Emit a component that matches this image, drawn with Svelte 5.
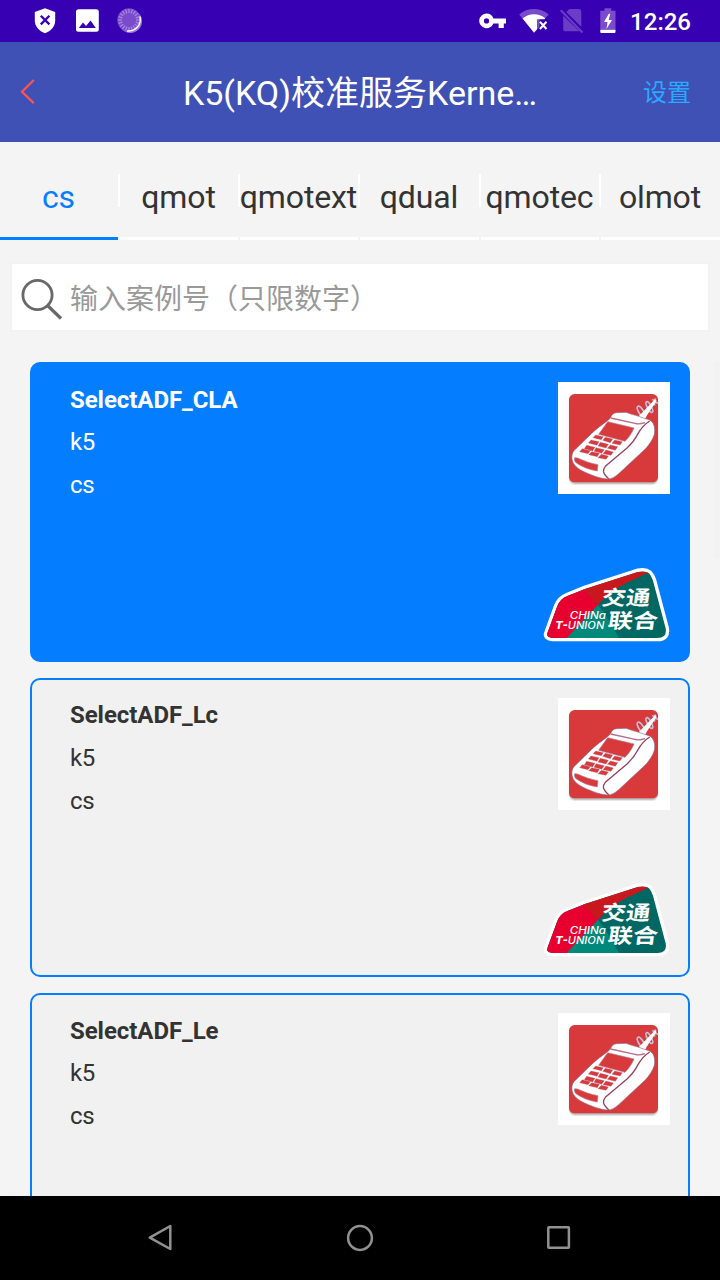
<script>
  const tabs = ['cs', 'qmot', 'qmotext', 'qdual', 'qmotec', 'olmot'];
  const cards = [
    { title: 'SelectADF_CLA', device: 'k5', kind: 'cs', union: true },
    { title: 'SelectADF_Lc', device: 'k5', kind: 'cs', union: true },
    { title: 'SelectADF_Le', device: 'k5', kind: 'cs', union: false }
  ];
  let activeTab = $state(0);
  let selected = $state(0);
  const ticks = Array.from({ length: 20 }, (_, i) => i * 18);
</script>

<div class="screen">
  <div class="status">
    <svg class="shield" width="22" height="26" viewBox="0 0 22 26">
      <path fill="#fff" d="M11 .2 21.2 4v8.6c0 6-4.2 10.700-10.200 12.600C5 23.300.8 18.600.8 12.600V4z" />
      <path stroke="#3700b3" stroke-width="2.300" d="m6.800 7.800 8.600 8.600m0-8.600-8.600 8.600" />
    </svg>
    <svg class="photo" width="24" height="24" viewBox="0 0 24 24">
      <rect x="0" y=".2" width="22.800" height="22.600" rx="2.500" fill="#fff" />
      <path fill="#3700b3" d="m2.800 19 4.200-5.400 3 3.500 4.600-5.700L19.800 19z" />
    </svg>
    <svg class="spinner" width="26" height="26" viewBox="0 0 26 26">
      <circle cx="13.300" cy="13.300" r="11.700" fill="#9d7ad8" />
      <circle cx="12" cy="12" r="11.700" fill="#7a4bcc" />
      <g stroke="#a88add" stroke-width="1.200">
        {#each ticks as angle}
          <path d="M12 1v4" transform="rotate({angle} 12 12)" />
        {/each}
      </g>
      <path d="M22.900 8.500c2.200 8.500-5 15.500-13 14.500" fill="none" stroke="#fff" stroke-width="1.500" />
    </svg>
    <span class="grow"></span>
    <svg class="key" width="28" height="16" viewBox="0 0 28 16">
      <path fill="#fff" fill-rule="evenodd" d="M7.500.6a7.300 7.300 0 0 1 6.900 4.800H27v5h-2.200v4.700h-5.200v-4.700h-5.200A7.300 7.300 0 1 1 7.500.6zm0 4.700a2.600 2.600 0 1 0 0 5.200 2.600 2.600 0 0 0 0-5.200z" />
    </svg>
    <svg class="wifi" width="32" height="26" viewBox="0 0 32 26">
      <path fill="#7a4bcc" d="M15 25 .2 6.400C9-.9 21-.9 29.800 6.400L26.500 10h-6v9z" />
      <path fill="#fff" d="M15 24.400 3.600 10.500c6.500-5.700 16.200-5.700 22.700-.2l-.8 1H18v10z" />
      <path d="m20.900 13.800 6.600 7.200m0-7.200L20.900 21" stroke="#fff" stroke-width="2" />
    </svg>
    <svg class="sim" width="24" height="26" viewBox="0 0 24 26">
      <path fill="#6b3dc6" d="M9.500 1h9.300c1.500 0 2.500 1 2.500 2.300V19L6.300 4.100zM3.200 7.800l16.400 15.500H5.200c-1.300 0-2-.8-2-2z" />
      <path stroke="#6b3dc6" stroke-width="2" d="M.8 2.300 22.500 24.500" />
    </svg>
    <svg class="battery" width="16" height="26" viewBox="0 0 16 26">
      <path fill="#7a4bcc" d="M4.500.2h6.800v2.500h4.200v19H.3v-19h4.200z" />
      <path fill="#fff" d="M.3 21.800h15.200v2c0 .9-.5 1.300-1.300 1.300H1.600c-.8 0-1.300-.4-1.300-1.300z" />
      <path fill="#fff" d="M8.800 5.700 4 14h3.500l-1 7L12 12H8.700l1.500-6.300z" />
    </svg>
    <span class="time">12:26</span>
  </div>

  <header>
    <svg width="16" height="26" viewBox="0 0 16 26" aria-label="back">
      <path d="M13.800 1 2 12.800l11.800 11.400" fill="none" stroke="#ff5252" stroke-width="2.300" />
    </svg>
    <h1>K5(KQ)校准服务Kerne…</h1>
    <span class="settings">设置</span>
  </header>

  <nav>
    {#each tabs as tab, i}
      {#if i > 0}<i class="divider"></i>{/if}
      <button class:active={i === activeTab} onclick={() => (activeTab = i)}>{tab}</button>
    {/each}
  </nav>

  <div class="search">
    <svg width="44" height="44" viewBox="0 0 44 44" fill="none" stroke="#686868">
      <circle cx="17.500" cy="18" r="14.600" stroke-width="2.800" />
      <path d="M27.500 28.500 41 41.500" stroke-width="3.200" />
    </svg>
    <span>输入案例号（只限数字）</span>
  </div>

  <main>
    {#each cards as card, i}
      <section class="card" class:selected={i === selected} onclick={() => (selected = i)} role="presentation">
        <div class="info">
          <h2>{card.title}</h2>
          <p>{card.device}</p>
          <p>{card.kind}</p>
        </div>
        <div class="marks">
          <svg class="terminal" width="112" height="112" viewBox="30 30 336 336">
            <rect x="30" y="30" width="336" height="336" fill="#fff" />
            <rect x="62" y="71" width="269" height="268" rx="18" fill="#999" opacity=".25" />
            <rect x="63" y="69" width="267" height="266" rx="17" fill="#777" opacity=".4" />
            <rect x="63" y="66" width="267" height="265" rx="17" fill="#d8393b" />
            <g fill="none" stroke="#c3bfd8" stroke-width="5">
              <ellipse cx="280" cy="120" rx="7" ry="20" transform="rotate(-32 280 120)" />
              <ellipse cx="304" cy="105" rx="6" ry="18" transform="rotate(-28 304 105)" />
              <path d="m313 82 17 13m-8-16-3 22" />
            </g>
            <path d="M265 140 321 82l5 4-40 60z" fill="#fff" />
            <path fill="#fff" stroke="#87718f" stroke-width="2" d="M188 137c2-8 8-14 17-15l29-1c9 2 16 7 29 9l42 14c14 8 17 25 14 43-4 15-15 30-25 42l-82 76c-12 10-20 16-34 16-18-1-32-6-47-12-26-10-44-19-54-34-6-11-8-25 0-38l53-52c23-22 43-32 58-48z" />
            <path fill="#d8393b" stroke="#aa7890" stroke-width="2" d="m179 149 79 19c-6 14-14 27-27 40l-79-21z" />
            <path fill="none" stroke="#b56f8a" stroke-width="4" d="m188 138 73 16c10 3 18 2 30-2" />
            <path fill="none" stroke="#94455d" stroke-width="4" d="M305 147c-14 9-26 22-35 38-8 16-20 31-33 43l-65 55c-8 10-10 20 10 37" />
            <path fill="#d8393b" stroke="#b88498" stroke-width="2" d="m80 257 9 1c19 9 39 16 61 20l-2 19c-24-4-48-13-64-25-4-4-6-9-4-15z" />
            <g fill="#d8393b" stroke="#ad6882" stroke-width="1">
              <path d="m143 189 23 5-6 9-25-6zm29 7 22 5-7 11-23-7zm28 8 23 5-7 10-24-5zM129 204l24 5-6 11-26-7zm28 7 24 6-7 11-24-6zm30 8 22 5-7 11-24-6zM116 220l25 6-7 11-25-7zm28 7 25 6-8 11-23-6zm30 7 22 6-7 10-24-5zM103 230l24 6-7 9-25-6zm28 9 23 5-6 10-26-6zm29 8 21 5-7 10-24-5z" />
            </g>
          </svg>
          {#if card.union}
            <svg class="union" width="128" height="78" viewBox="22 18 384 234">
              <defs>
                <clipPath id="union-{i}">
                  <path d="M36 217 65 138Q74 116 95 108L150 86 290 41Q325 28 340 40 347 47 352 62L390 205Q395 234 366 234H50Q29 232 36 217Z" />
                </clipPath>
              </defs>
              <path fill="#fff" stroke="#fff" stroke-width="20" stroke-linejoin="round" d="M36 217 65 138Q74 116 95 108L150 86 290 41Q325 28 340 40 347 47 352 62L390 205Q395 234 366 234H50Q29 232 36 217Z" />
              <g clip-path="url(#union-{i})">
                <path fill="#006763" d="M20 20h380v220H20z" />
                <path fill="#e7002f" d="M20 80h118l49 55-95 101H20z" />
                <path fill="#c9171e" d="m138 84 40-60h170l-10 14-68 32-46 26-37 39z" />
                <path fill="#00887a" d="m187 134 28 40 36 62H91z" />
              </g>
              <g fill="#fff" font-family="'Noto Sans CJK SC', sans-serif" font-weight="700">
                <text transform="translate(195 134) skewX(-8)" font-size="61" textLength="146" lengthAdjust="spacingAndGlyphs">交通</text>
                <text transform="translate(214 203) skewX(-8)" font-size="61" textLength="150" lengthAdjust="spacingAndGlyphs">联合</text>
              </g>
              <g fill="#fff" font-family="Inter, sans-serif" font-style="italic" font-weight="500">
                <text x="102" y="178" font-size="31" textLength="109" lengthAdjust="spacingAndGlyphs">CHINa</text>
                <text x="59" y="207" font-size="32" textLength="147" lengthAdjust="spacingAndGlyphs"><tspan font-weight="800">T-</tspan>UNION</text>
              </g>
            </svg>
          {/if}
        </div>
      </section>
    {/each}
    <i class="scrollbar"></i>
  </main>

  <footer>
    <svg width="26" height="28" viewBox="0 0 26 28"><path d="M23.300 2v23L2.800 13.700z" /></svg>
    <svg width="28" height="28" viewBox="0 0 28 28"><circle cx="14" cy="14" r="11.900" /></svg>
    <svg width="26" height="28" viewBox="0 0 26 28"><rect x="2.300" y="3.200" width="20.600" height="20.600" rx=".5" /></svg>
  </footer>
</div>

<style>
  :global(body) { margin: 0; overflow: hidden; }
  .screen {
    width: 720px;
    height: 1280px;
    display: flex;
    flex-direction: column;
    overflow: hidden;
    background: #f4f4f4;
    color: #333;
    font-family: Roboto, 'Noto Sans CJK SC', sans-serif;
  }
  svg { display: block; flex: none; }
  .status {
    height: 42px;
    flex: none;
    display: flex;
    align-items: center;
    background: #3700b3;
    padding: 0 29px 0 34px;
    box-sizing: border-box;
    color: #fff;
  }
  .photo { margin-left: 20px; }
  .spinner { margin-left: 17px; }
  .grow { flex: 1; }
  .wifi { margin-left: 12px; }
  .sim { margin-left: 9px; }
  .battery { margin-left: 16px; }
  .time { margin-left: 14px; padding-top: 2px; font-size: 24px; font-weight: 500; line-height: 40px; }
  header {
    height: 100px;
    flex: none;
    display: flex;
    align-items: center;
    background: #3f51b5;
    color: #fff;
    padding: 0 29px 0 20px;
    box-sizing: border-box;
  }
  h1 { flex: 1; margin: 0; padding: 2px 0 0 41px; text-align: center; font-size: 34px; font-weight: 400; line-height: 50px; white-space: nowrap; }
  .settings { font-size: 24px; line-height: 36px; padding-top: 1px; color: #29a9ff; }
  nav {
    height: 98px;
    flex: none;
    display: grid;
    grid-template-columns: 118px 2px 118px 2px 118px 2px 119px 2px 118px 2px 119px;
  }
  nav button {
    min-width: 0;
    padding: 15px 1px 0 0;
    border: 0;
    border-bottom: 3px solid #fff;
    background: none;
    font: 32px/42px Roboto, sans-serif;
    letter-spacing: -.12px;
    white-space: nowrap;
    display: flex;
    align-items: center;
    justify-content: center;
    color: #333;
  }
  nav button.active { color: #047eff; border-color: #047eff; }
  .divider { height: 33px; margin-top: 32px; background: #fff; }
  .search {
    flex: none;
    height: 66px;
    margin: 24px 12px 32px;
    padding-left: 8px;
    box-sizing: border-box;
    display: flex;
    align-items: center;
    background: #fff;
    box-shadow: 0 0 0 2px #f2f2f2;
    color: #999;
    font-size: 28px;
  }
  .search svg { margin: 3px 6px 0 0; }
  main { position: relative; flex: 1; min-height: 0; overflow: hidden; padding: 0 30px; display: flex; flex-direction: column; gap: 16px; }
  .scrollbar { position: absolute; right: 0; top: 0; width: 7px; height: 196px; background: #f2f2f2; }
  .card {
    flex: none;
    height: 299.500px;
    box-sizing: border-box;
    border: 2px solid #047eff;
    border-radius: 10px;
    background: #f1f1f1;
    display: flex;
    justify-content: space-between;
    padding: 18px 18px 16px 38px;
  }
  .card.selected { background: #047eff; color: #fff; }
  h2, p { margin: 0; font-size: 24px; line-height: 43px; font-weight: 400; letter-spacing: -.3px; }
  h2 { font-weight: 700; line-height: 36px; margin: -.4px 0 .4px; padding-bottom: 3px; letter-spacing: -.06px; }
  .marks { display: flex; flex-direction: column; justify-content: space-between; align-items: flex-end; }
  .union { margin-right: -1px; }
  footer {
    height: 84px;
    flex: none;
    background: #000;
    display: flex;
    align-items: center;
    justify-content: space-between;
    padding: 0 148px 0 147px;
    box-sizing: border-box;
  }
  footer svg { fill: none; stroke: #919191; stroke-width: 2.500; stroke-linejoin: round; }
</style>
